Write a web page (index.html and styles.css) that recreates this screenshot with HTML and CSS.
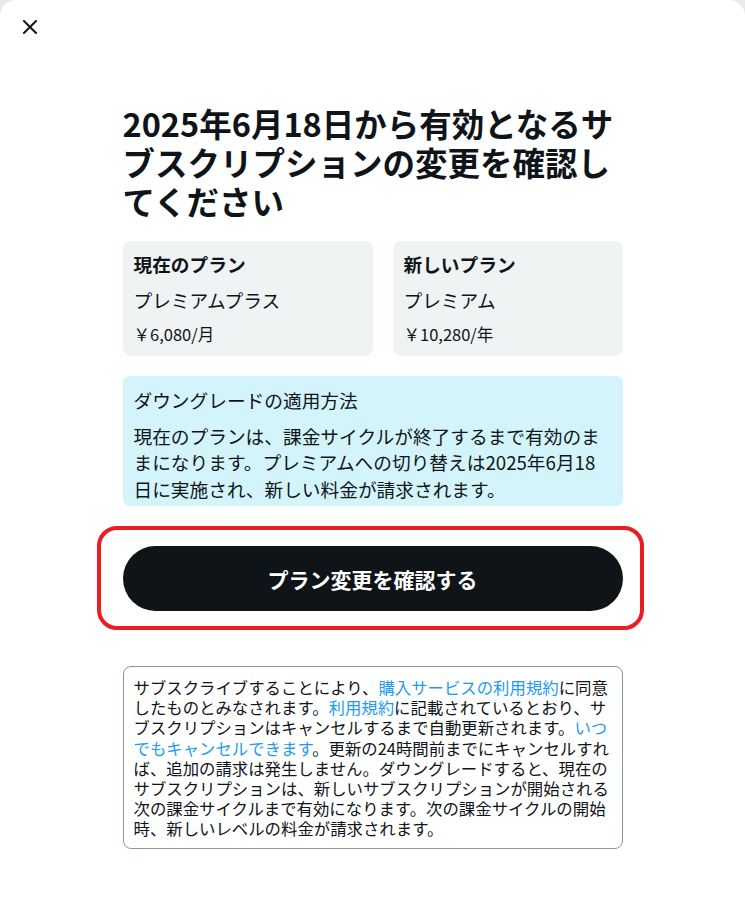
FILE: index.html
```html
<!DOCTYPE html>
<html lang="ja">
<head>
<meta charset="utf-8">
<title>サブスクリプションの変更を確認</title>
<link rel="stylesheet" href="styles.css">
</head>
<body>
<div class="modal">
  <div class="modal-header">
    <button class="close-btn" aria-label="閉じる">
      <svg viewBox="0 0 14 14" width="14" height="14"><path d="M1 1 L13 13 M13 1 L1 13" stroke="#0f1419" stroke-width="2" fill="none" stroke-linecap="square"/></svg>
    </button>
  </div>
  <main class="content">
    <h1 class="title">2025年6月18日から有効となるサブスクリプションの変更を確認してください</h1>
    <div class="plans">
      <div class="plan-card">
        <div class="plan-label">現在のプラン</div>
        <div class="plan-name">プレミアムプラス</div>
        <div class="plan-price">￥6,080/月</div>
      </div>
      <div class="plan-card">
        <div class="plan-label">新しいプラン</div>
        <div class="plan-name">プレミアム</div>
        <div class="plan-price">￥10,280/年</div>
      </div>
    </div>
    <div class="info-box">
      <div class="info-title">ダウングレードの適用方法</div>
      <p class="info-body">現在のプランは、課金サイクルが終了するまで有効のままになります。プレミアムへの切り替えは2025年6月18日に実施され、新しい料金が請求されます。</p>
    </div>
    <div class="confirm-wrap">
      <button class="confirm-btn">プラン変更を確認する</button>
      <div class="highlight"></div>
    </div>
    <div class="disclaimer">サブスクライブすることにより、<a href="#">購入サービスの利用規約</a>に同意したものとみなされます。<a href="#">利用規約</a>に記載されているとおり、サブスクリプションはキャンセルするまで自動更新されます。<a href="#">いつでもキャンセルできます</a>。更新の24時間前までにキャンセルすれば、追加の請求は発生しません。ダウングレードすると、現在のサブスクリプションは、新しいサブスクリプションが開始される次の課金サイクルまで有効になります。次の課金サイクルの開始時、新しいレベルの料金が請求されます。</div>
  </main>
</div>
</body>
</html>
```

FILE: styles.css
```css
* { box-sizing: border-box; }
html, body { margin: 0; padding: 0; }
body {
  background: #e9e9e9;
  font-family: "Noto Sans CJK JP", "Noto Sans", sans-serif;
  color: #0f1419;
}
.modal {
  background: #ffffff;
  border-radius: 16px 16px 0 0;
  min-height: 897px;
}
.modal-header {
  height: 44px;
  padding: 10px 0 0 13px;
}
.close-btn {
  width: 34px;
  height: 34px;
  border: none;
  background: transparent;
  padding: 0;
  display: flex;
  align-items: center;
  justify-content: center;
  cursor: pointer;
}
.content {
  width: 500px;
  margin: 0 auto;
}
.title {
  margin: 59px 0 0;
  font-size: 32.5px;
  line-height: 39px;
  font-weight: 700;
}
.plans {
  display: grid;
  grid-template-columns: 250px 1fr;
  gap: 20px;
  margin-top: 21px;
}
.plan-card {
  background: #eff3f4;
  border-radius: 8px;
  padding: 11px 11px 10px;
}
.plan-label {
  font-weight: 700;
  font-size: 18.7px;
  line-height: 24px;
}
.plan-name {
  font-size: 18.7px;
  line-height: 28px;
  margin-top: 10px;
}
.plan-price {
  font-size: 16.5px;
  line-height: 24px;
  margin-top: 8px;
}
.info-box {
  margin-top: 20px;
  background: #d4f4fc;
  border-radius: 6px;
  padding: 11px 11px 4px;
}
.info-title {
  font-size: 18.7px;
  line-height: 26px;
}
.info-body {
  margin: 10px 0 0;
  font-size: 18.7px;
  line-height: 26.4px;
}
.confirm-wrap {
  position: relative;
  margin-top: 40px;
}
.confirm-btn {
  display: block;
  width: 100%;
  height: 65px;
  border: none;
  border-radius: 9999px;
  background: #0f1419;
  color: #ffffff;
  font-family: "Noto Sans CJK JP", "Noto Sans", sans-serif;
  font-size: 21px;
  font-weight: 700;
  cursor: pointer;
}
.highlight {
  position: absolute;
  top: -20px;
  left: -26px;
  right: -21px;
  bottom: -19px;
  border: 4px solid #ea1c24;
  border-radius: 20px;
  pointer-events: none;
}
.disclaimer {
  margin-top: 55px;
  border: 1px solid #8b98a5;
  border-radius: 8px;
  padding: 10px;
  font-size: 16.4px;
  line-height: 20.1px;
  color: #0f1419;
}
.disclaimer a {
  color: #1d9bf0;
  text-decoration: none;
}
```
